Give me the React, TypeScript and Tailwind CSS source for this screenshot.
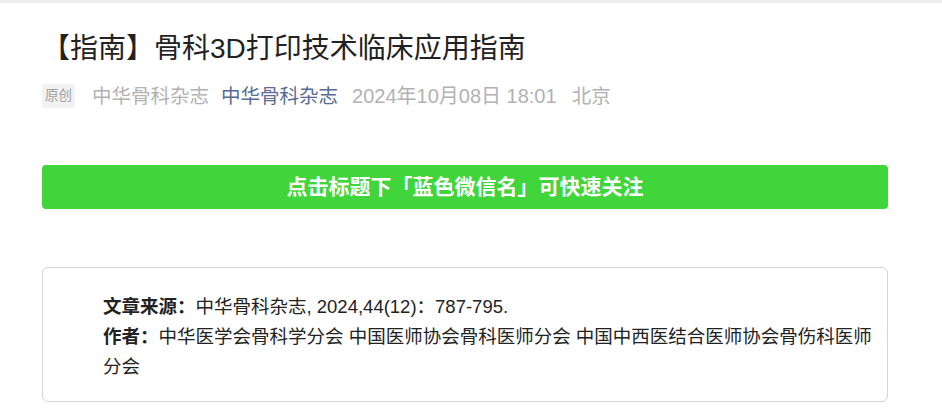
const FONT = '"Liberation Sans", "Noto Sans CJK SC", sans-serif';

export default function App() {
  return (
    <div className="w-[942px] h-[420px] bg-white overflow-hidden" style={{ fontFamily: FONT }}>
      <div className="h-[3px] bg-[#ededed]" />
      <div className="ml-[42px] w-[846px]">
        <h1 className="mt-[26px] text-[28px] leading-[40px] text-[#222] font-normal">
          【指南】骨科3D打印技术临床应用指南
        </h1>
        <div className="mt-[14px] flex items-center text-[19.5px] leading-[26px] text-[#b2b2b2]">
          <span className="mr-[17px] px-[3px] text-[13.5px] leading-[24px] bg-[#f2f2f2] text-[#a0a0a0] rounded-[2px]">
            原创
          </span>
          <span className="mr-[12px]">中华骨科杂志</span>
          <span className="mr-[14px] text-[#576b95]">中华骨科杂志</span>
          <span className="mr-[15px] text-[20px]">2024年10月08日 18:01</span>
          <span>北京</span>
        </div>
        <div className="mt-[56px] h-[44px] rounded-[4px] bg-[#40d53a] flex items-center justify-center text-white font-bold text-[21px]">
          点击标题下「蓝色微信名」可快速关注
        </div>
        <div className="mt-[58px] h-[135px] border border-[#d4d4d4] rounded-[6px] pl-[60px] pr-[10px] pt-[24px] text-[18.5px] leading-[30px] text-[#222]">
          <p>
            <b>文章来源：</b>
            <span>中华骨科杂志, 2024,44(12)：787-795.</span>
          </p>
          <p>
            <b>作者：</b>
            <span>中华医学会骨科学分会 中国医师协会骨科医师分会 中国中西医结合医师协会骨伤科医师分会</span>
          </p>
        </div>
      </div>
    </div>
  );
}
